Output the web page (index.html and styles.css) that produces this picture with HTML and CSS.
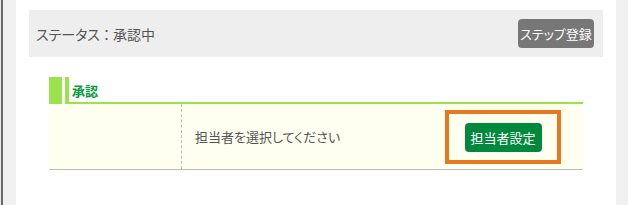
FILE: index.html
```html
<!DOCTYPE html>
<html lang="ja">
<head>
<meta charset="utf-8">
<link rel="stylesheet" href="styles.css">
</head>
<body>
<div class="frame">
  <div class="edge"></div>
  <div class="edge-bar"></div>
  <div class="gutter"></div>
  <main class="main">
    <div class="status">
      <span class="status-text">ステータス<span class="colon">：</span>承認中</span>
      <button class="btn btn-gray">ステップ登録</button>
    </div>
    <section class="step">
      <div class="step-head">
        <div class="step-block"></div>
        <div class="step-gap"></div>
        <h3 class="step-title">承認</h3>
      </div>
      <div class="step-row">
        <div class="cell-left"></div>
        <div class="cell-main">
          <span class="cell-text">担当者を選択してください</span>
          <div class="highlight">
            <button class="btn btn-green">担当者設定</button>
          </div>
        </div>
      </div>
    </section>
  </main>
  <div class="gutter-right"></div>
</div>
</body>
</html>
```

FILE: styles.css
```css
* { box-sizing: border-box; }
html, body { margin: 0; padding: 0; }
body {
  font-family: "Noto Sans CJK JP", "Noto Sans", sans-serif;
  font-feature-settings: "palt";
  color: #555;
  background: #fff;
}
.frame {
  display: flex;
  width: 628px;
  height: 205px;
}
.edge { width: 1px; background: #e8e8e8; }
.edge-bar { width: 2px; background: #6a6a6a; }
.gutter { width: 13px; background: #f0f0f0; }
.gutter-right { width: 12px; background: #f0f0f0; }
.main {
  flex: 1;
  padding: 10px 13px 0 13px;
  background: #fff;
}
.status {
  height: 47px;
  background: #eeeeee;
  display: flex;
  align-items: center;
  justify-content: space-between;
  padding: 0 9px 0 7px;
}
.status-text {
  font-size: 14px;
  color: #555;
  white-space: nowrap;
  padding-top: 1px;
}
.colon {
  display: inline-block;
  padding: 0 3px;
}
.btn {
  font-family: inherit;
  font-feature-settings: "palt";
  border: none;
  color: #fff;
  font-size: 13px;
  height: 29px;
  border-radius: 4px;
  padding: 0 2px;
  line-height: 29px;
  white-space: nowrap;
  text-align: center;
}
.btn-gray { background: #777; width: 76px; }
.btn-green { background: #00893c; width: 77px; }
.step {
  margin: 20px 20px 0 20px;
}
.step-head {
  display: flex;
  height: 27px;
}
.step-block { width: 13px; background: #9be24f; }
.step-gap { width: 3px; }
.step-title {
  flex: 1;
  margin: 0;
  border-left: 4px solid #9be24f;
  border-bottom: 2px solid #9be24f;
  padding: 2px 0 0 3px;
  font-size: 13px;
  font-weight: bold;
  color: #079a3c;
  display: flex;
  align-items: center;
}
.step-row {
  display: flex;
  height: 66px;
  background: #fffff0;
  border-bottom: 1px solid #bdbdbd;
}
.cell-left {
  width: 133px;
  border-right: 1px dashed #bbb;
}
.cell-main {
  flex: 1;
  display: flex;
  align-items: center;
  justify-content: space-between;
  padding: 0 22px 0 13px;
}
.cell-text {
  font-size: 13px;
  color: #555;
}
.highlight {
  width: 116px;
  height: 54px;
  border: 4px solid #e87722;
  display: flex;
  align-items: center;
  justify-content: center;
  margin-top: 1px;
}
```
